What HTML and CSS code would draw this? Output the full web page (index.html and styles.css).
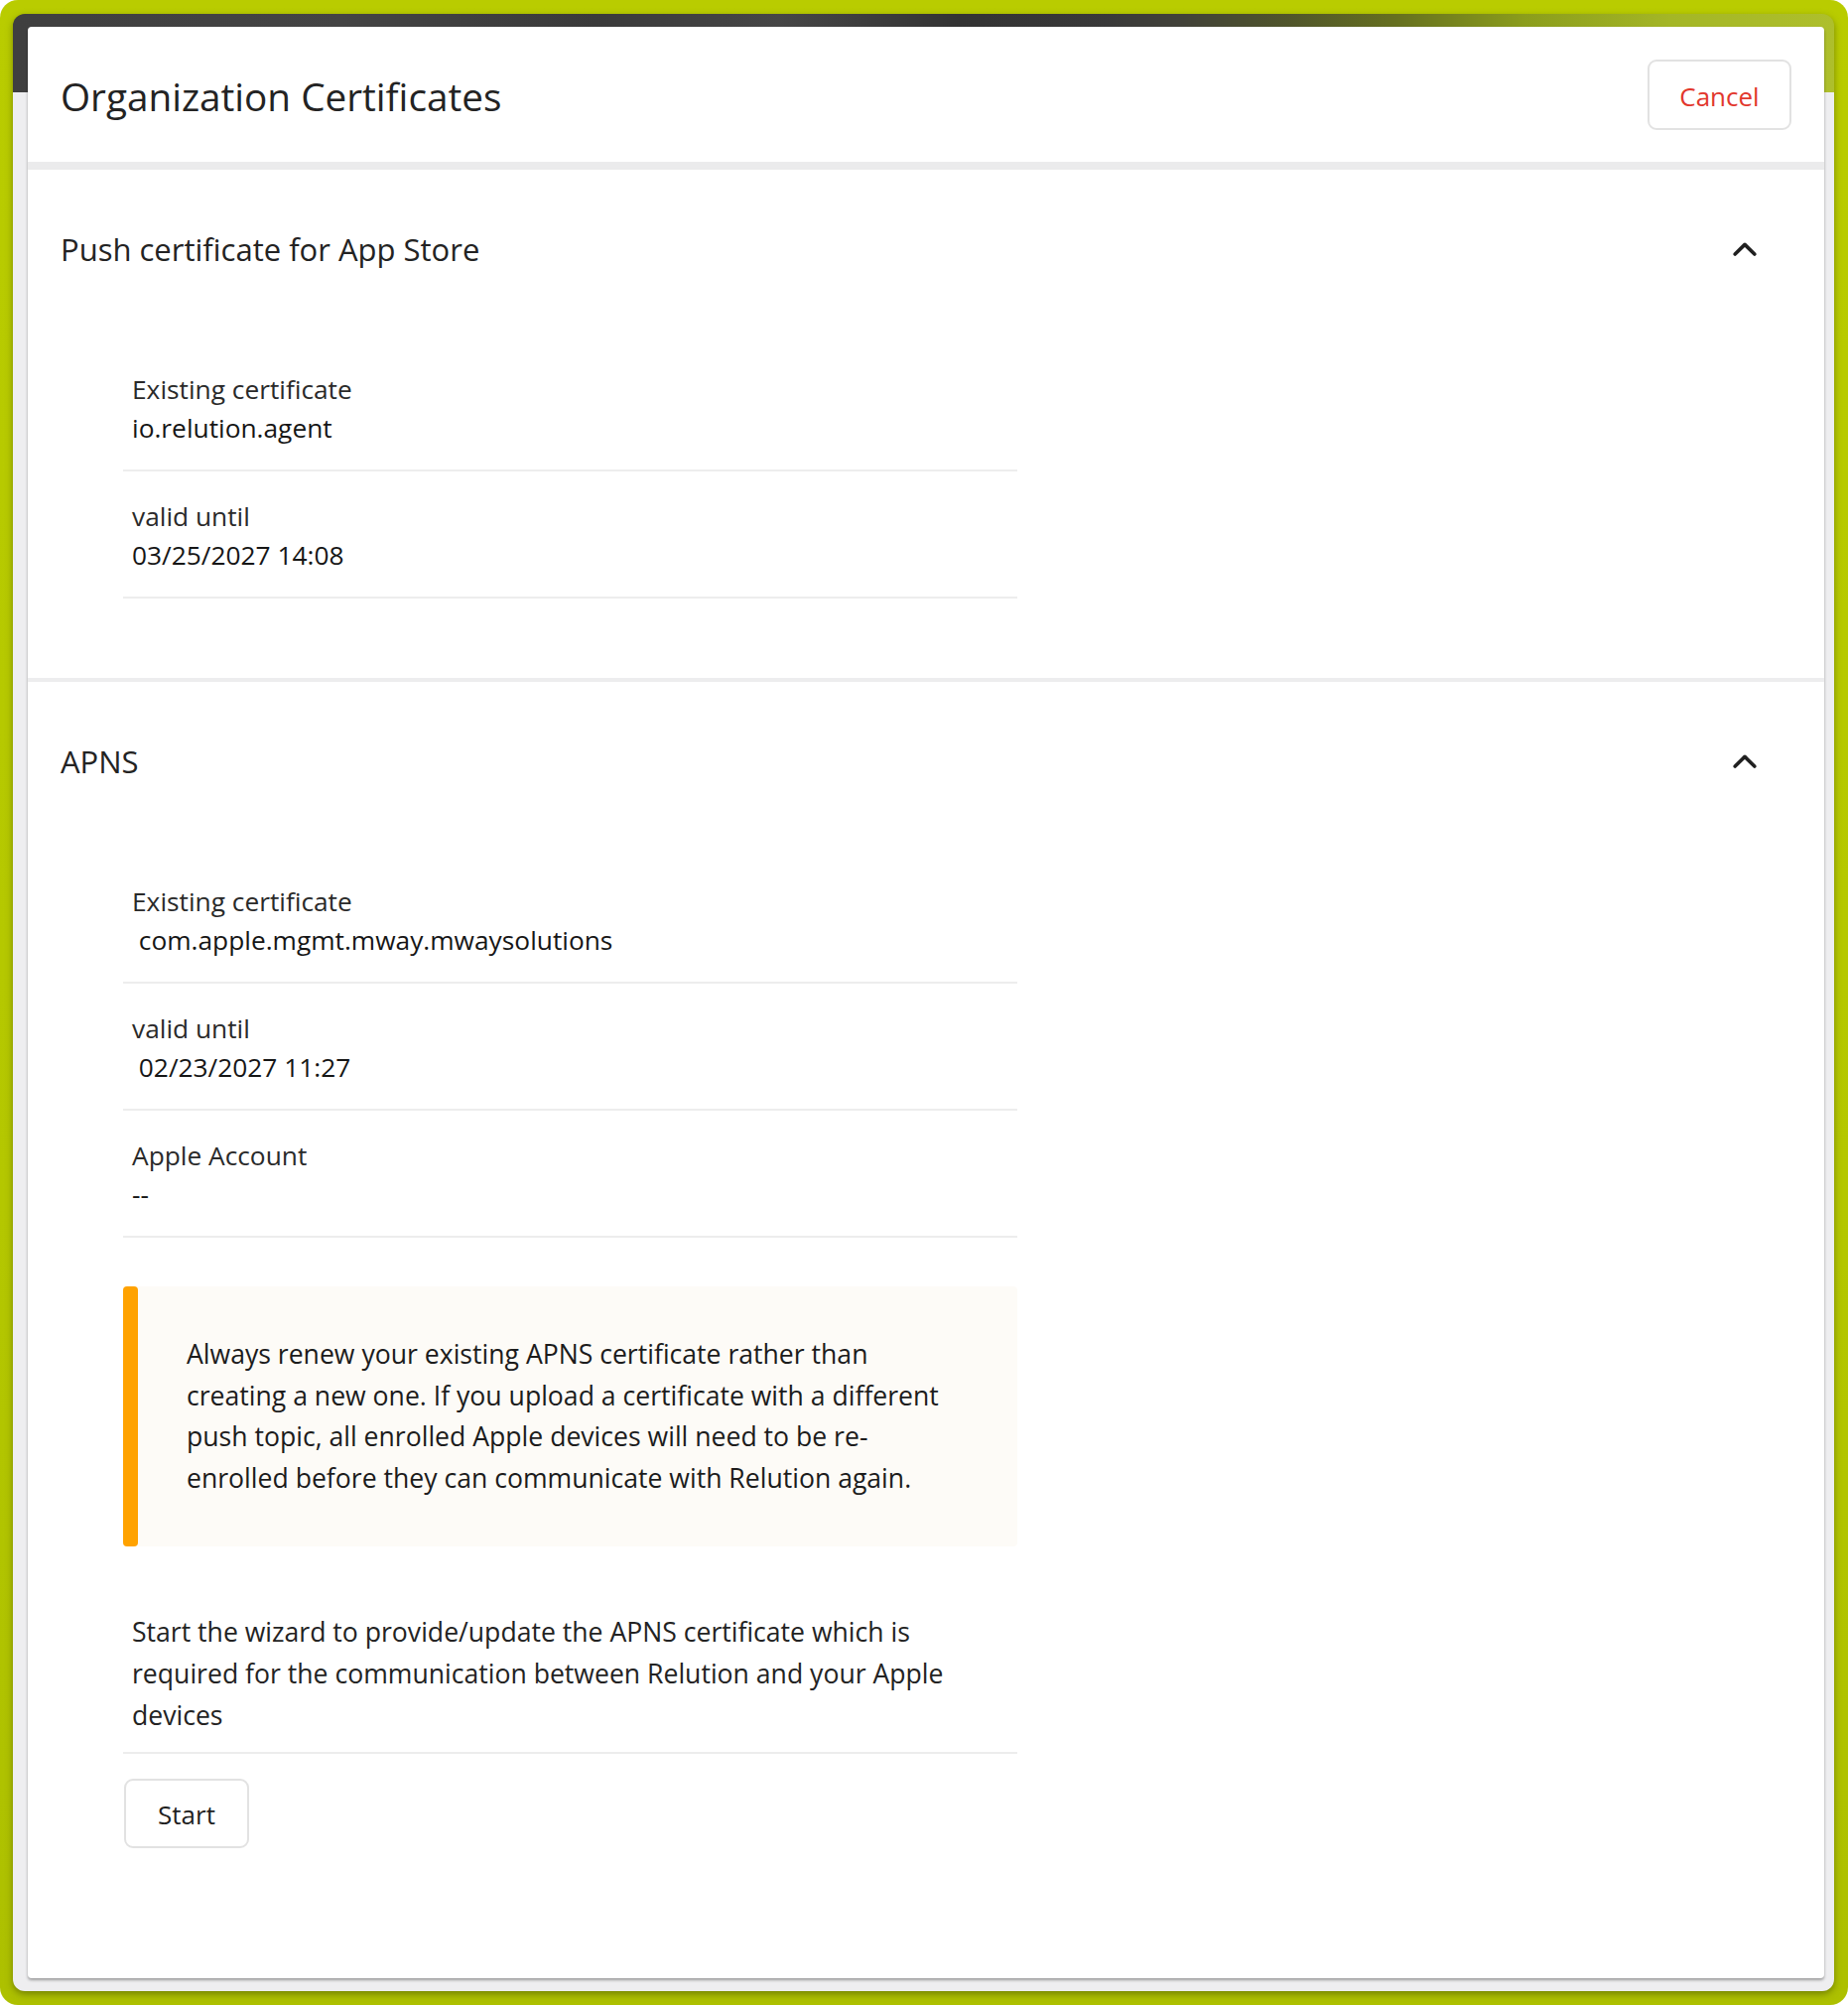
FILE: index.html
```html
<!DOCTYPE html>
<html lang="en">
<head>
<meta charset="utf-8">
<title>Organization Certificates</title>
<link rel="stylesheet" href="styles.css">
</head>
<body>
<div class="frame">
  <div class="window">
    <div class="dialog">
      <header class="dlg-header">
        <h1 class="dlg-title">Organization Certificates</h1>
        <button class="btn btn-cancel" type="button">Cancel</button>
      </header>

      <section class="panel">
        <div class="panel-head">
          <h2 class="panel-title">Push certificate for App Store</h2>
          <svg class="chevron" width="24" height="14" viewBox="0 0 24 14" aria-hidden="true"><path d="M2.2 12 L12 2.4 L21.8 12" fill="none" stroke="#202020" stroke-width="3.6" stroke-linecap="round" stroke-linejoin="round"/></svg>
        </div>
        <div class="panel-body">
          <div class="field">
            <div class="field-label">Existing certificate</div>
            <div class="field-value">io.relution.agent</div>
          </div>
          <div class="field">
            <div class="field-label">valid until</div>
            <div class="field-value">03/25/2027 14:08</div>
          </div>
        </div>
      </section>

      <section class="panel panel-last">
        <div class="panel-head">
          <h2 class="panel-title">APNS</h2>
          <svg class="chevron" width="24" height="14" viewBox="0 0 24 14" aria-hidden="true"><path d="M2.2 12 L12 2.4 L21.8 12" fill="none" stroke="#202020" stroke-width="3.6" stroke-linecap="round" stroke-linejoin="round"/></svg>
        </div>
        <div class="panel-body">
          <div class="field">
            <div class="field-label">Existing certificate</div>
            <div class="field-value">&nbsp;com.apple.mgmt.mway.mwaysolutions</div>
          </div>
          <div class="field">
            <div class="field-label">valid until</div>
            <div class="field-value">&nbsp;02/23/2027 11:27</div>
          </div>
          <div class="field">
            <div class="field-label">Apple Account</div>
            <div class="field-value">--</div>
          </div>

          <div class="notice">
            <div class="notice-bar"></div>
            <p class="notice-text">Always renew your existing APNS certificate rather than creating a new one. If you upload a certificate with a different push topic, all enrolled Apple devices will need to be re-enrolled before they can communicate with Relution again.</p>
          </div>

          <p class="desc">Start the wizard to provide/update the APNS certificate which is required for the communication between Relution and your Apple devices</p>

          <button class="btn btn-start" type="button">Start</button>
        </div>
      </section>
    </div>
  </div>
</div>
</body>
</html>
```

FILE: styles.css
```css
* {
  box-sizing: border-box;
}

html, body {
  margin: 0;
  padding: 0;
  background: #ffffff;
}

body {
  font-family: "Open Sans", "Noto Sans", "Liberation Sans", sans-serif;
  color: #222222;
}

.frame {
  width: 1862px;
  height: 2020px;
  padding: 14px 14px 14px 13px;
  background: linear-gradient(180deg, #b9cc00 0%, #b4c700 60%, #adc000 100%);
  border-radius: 18px;
}

.window {
  height: 100%;
  padding: 13px 10px 13px 15px;
  border-radius: 12px;
  overflow: hidden;
  background:
    linear-gradient(90deg,
      #3f3f3f 0%,
      #444444 18%,
      #3a3a3a 32%,
      #464646 42%,
      #333333 52%,
      #393939 60%,
      #414139 64%,
      #50552b 70%,
      #66701f 76%,
      #8b9d1c 83%,
      #a4b626 91%,
      #aebf2c 100%) top left / 100% 79px no-repeat,
    #eeeef0;
  box-shadow: 0 3px 7px rgba(70, 80, 0, 0.55);
}

.dialog {
  height: 100%;
  display: flex;
  flex-direction: column;
  background: #ffffff;
  border-radius: 4px;
  box-shadow: 0 2px 3px rgba(0, 0, 0, 0.35);
  overflow: hidden;
}

/* header */
.dlg-header {
  flex: none;
  height: 144px;
  padding: 0 33px;
  display: flex;
  align-items: center;
  justify-content: space-between;
  border-bottom: 8px solid #ebebec;
}

.dlg-title {
  margin: 4px 0 0 0;
  font-size: 38.7px;
  font-weight: 400;
  line-height: 52px;
  color: #232323;
}

.btn {
  font-family: inherit;
  font-size: 26px;
  background: #ffffff;
  border: 2px solid #e2e2e2;
  border-radius: 9px;
  cursor: pointer;
}

.btn-cancel {
  width: 145px;
  height: 71px;
  padding: 4px 0 0 0;
  color: #e2372d;
}

/* panels */
.panel {
  flex: none;
  padding-bottom: 80px;
  border-bottom: 4px solid #ededee;
}

.panel-last {
  flex: 1;
  border-bottom: 0;
}

.panel-head {
  display: flex;
  align-items: center;
  justify-content: space-between;
  padding: 59px 68px 0 33px;
}

.panel-title {
  margin: 0;
  font-size: 31px;
  font-weight: 400;
  line-height: 42px;
  color: #232323;
}

.chevron {
  display: block;
}

.panel-body {
  width: 901px;
  margin: 75px 0 0 96px;
}

.field {
  padding: 26px 9px 22px;
  border-bottom: 2px solid #ededed;
  font-size: 26.3px;
  line-height: 39px;
}

.field-label {
  color: #2a2a2a;
}

.field-value {
  color: #161616;
}

/* notice */
.notice {
  display: flex;
  margin-top: 49px;
  background: #fdfbf7;
  border-radius: 4px;
}

.notice-bar {
  flex: none;
  width: 15px;
  background: #ffa200;
  border-radius: 4px;
}

.notice-text {
  margin: 0;
  padding: 48px 66px 48px 49px;
  font-size: 26.6px;
  line-height: 41.6px;
  color: #1c1c1c;
}

.desc {
  margin: 66px 0 0 0;
  padding: 0 46px 16px 9px;
  border-bottom: 2px solid #ededed;
  font-size: 26.6px;
  line-height: 41.6px;
  color: #232323;
}

.btn-start {
  display: block;
  width: 126px;
  height: 70px;
  margin: 25px 0 0 1px;
  padding: 2px 0 0 0;
  color: #1f1f1f;
}
```
